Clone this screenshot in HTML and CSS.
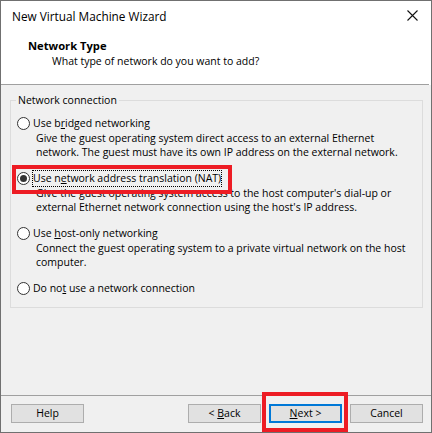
FILE: index.html
```html
<!DOCTYPE html>
<html>
<head>
<meta charset="utf-8">
<title>New Virtual Machine Wizard</title>
<link rel="stylesheet" href="styles.css">
</head>
<body>
<div class="window">
  <div class="titlebar">
    <span class="title">New Virtual Machine Wizard</span>
    <svg class="close" width="11" height="11" viewBox="0 0 11 11"><path d="M0.5 0.5 L10.5 10.5 M10.5 0.5 L0.5 10.5" stroke="#111" stroke-width="1.1" fill="none"/></svg>
  </div>
  <div class="header">
    <div class="h-title">Network Type</div>
    <div class="h-sub">What type of network do you want to add?</div>
  </div>
  <div class="content">
    <fieldset class="group">
      <legend>Network connection</legend>
      <div class="option">
        <div class="opt-row"><span class="radio"></span><span class="opt-label">Use b<u>r</u>idged networking</span></div>
        <div class="desc">Give the guest operating system direct access to an external Ethernet<br>network. The guest must have its own IP address on the external network.</div>
      </div>
      <div class="option">
        <div class="opt-row"><span class="radio checked"></span><span class="opt-label focus">Use n<u>e</u>twork address translation (NAT)</span></div>
        <div class="desc">Give the guest operating system access to the host computer's dial-up or<br>external Ethernet network connection using the host's IP address.</div>
      </div>
      <div class="option">
        <div class="opt-row"><span class="radio"></span><span class="opt-label">Use <u>h</u>ost-only networking</span></div>
        <div class="desc">Connect the guest operating system to a private virtual network on the host<br>computer.</div>
      </div>
      <div class="option last">
        <div class="opt-row"><span class="radio"></span><span class="opt-label">Do no<u>t</u> use a network connection</span></div>
      </div>
    </fieldset>
  </div>
  <div class="footer">
    <button class="btn">Help</button>
    <div class="spacer"></div>
    <button class="btn back">&lt; <u>B</u>ack</button>
    <button class="btn primary"><u>N</u>ext &gt;</button>
    <button class="btn cancel">Cancel</button>
  </div>
  <div class="mark mark-nat"></div>
  <div class="mark mark-next"></div>
</div>
</body>
</html>
```

FILE: styles.css
```css
html, body {
  margin: 0;
  padding: 0;
  background: #ffffff;
}
body {
  font-family: "Open Sans", "Noto Sans", sans-serif;
  font-size: 10.5px;
  color: #000;
}
.window {
  position: relative;
  width: 432px;
  height: 433px;
  box-sizing: border-box;
  border: 1px solid #707070;
  display: flex;
  flex-direction: column;
  background: #ffffff;
}
.titlebar {
  height: 31px;
  display: flex;
  align-items: center;
  padding-left: 11px;
  padding-right: 13px;
  font-size: 11.8px;
}
.title {
  flex: 1;
  line-height: 15px;
}
.close {
  display: block;
  margin-top: -2px;
}
.header {
  height: 52px;
  border-bottom: 1px solid #a0a0a0;
  margin-right: 2px;
  padding-left: 27px;
  box-sizing: content-box;
}
.h-title {
  font-weight: 700;
  font-size: 11.2px;
  line-height: 15px;
  padding-top: 6px;
}
.h-sub {
  line-height: 15px;
  margin-top: 1px;
  padding-left: 24px;
}
.content {
  flex: 1;
  background: #f0f0f0;
  padding: 8px 8px 0 9px;
}
.group {
  margin: 0;
  border: 1px solid #dcdcdc;
  padding: 8px 6px 11px 6px;
}
.group legend {
  line-height: 15px;
  padding: 0 2px;
  margin-left: -1px;
}
.option {
  margin-bottom: 12px;
}
.option.last {
  margin-bottom: 0;
}
.opt-row {
  display: flex;
  align-items: center;
  height: 15px;
}
.radio {
  width: 13px;
  height: 13px;
  box-sizing: border-box;
  border: 1px solid #333333;
  border-radius: 50%;
  background: #ffffff;
  margin-right: 3px;
  position: relative;
  flex: none;
}
.radio.checked::after {
  content: "";
  position: absolute;
  left: 2px;
  top: 2px;
  width: 7px;
  height: 7px;
  border-radius: 50%;
  background: #333333;
}
.opt-label {
  line-height: 15px;
  white-space: nowrap;
}
.opt-label.focus {
  outline: 1px dotted #000;
  outline-offset: 0;
}
.desc {
  line-height: 14px;
  padding-left: 19px;
  white-space: nowrap;
}
.footer {
  border-top: 1px solid #a0a0a0;
  background: #f0f0f0;
  display: flex;
  padding: 8px 8px 9px 10px;
}
.spacer {
  flex: 1;
}
.btn {
  width: 73px;
  height: 19px;
  box-sizing: border-box;
  border: 1px solid #adadad;
  background: #e1e1e1;
  font-family: inherit;
  font-size: 10.5px;
  color: #000;
  padding: 0;
  line-height: 15px;
}
.btn.primary {
  border: 2px solid #0078d7;
  margin-left: 8px;
}
.btn.cancel {
  margin-left: 8px;
}
.mark {
  position: absolute;
  border: 4px solid #ed1c24;
  box-sizing: border-box;
}
.mark-nat {
  left: 11px;
  top: 164px;
  width: 220px;
  height: 29px;
}
.mark-next {
  left: 261px;
  top: 391px;
  width: 86px;
  height: 40px;
}
```
